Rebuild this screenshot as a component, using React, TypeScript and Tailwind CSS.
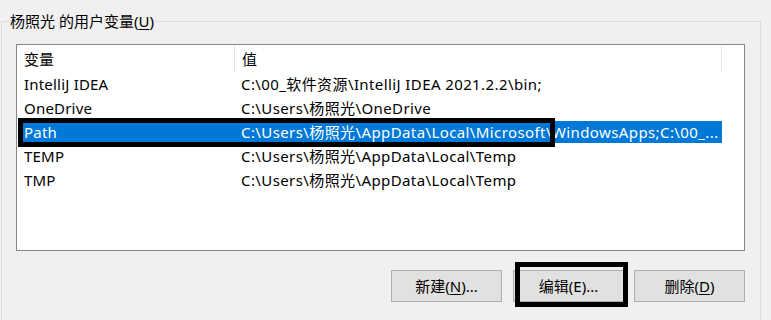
const font = "font-['Noto_Sans','Noto_Sans_CJK_SC',sans-serif]"

const rows = [
  { name: "IntelliJ IDEA", value: "C:\\00_软件资源\\IntelliJ IDEA 2021.2.2\\bin;" },
  { name: "OneDrive", value: "C:\\Users\\杨照光\\OneDrive" },
  { name: "Path", value: "C:\\Users\\杨照光\\AppData\\Local\\Microsoft\\WindowsApps;C:\\00_...", selected: true },
  { name: "TEMP", value: "C:\\Users\\杨照光\\AppData\\Local\\Temp" },
  { name: "TMP", value: "C:\\Users\\杨照光\\AppData\\Local\\Temp" },
]

function WinButton({ label, hotkey, suffix }: { label: string; hotkey: string; suffix: string }) {
  return (
    <button className="flex h-[32px] w-[111px] items-center justify-center border border-[#adadad] bg-[#e1e1e1] text-[15px] text-black">
      {label}(<span className="underline underline-offset-2">{hotkey}</span>){suffix}
    </button>
  )
}

export default function App() {
  return (
    <div className={`relative h-[320px] w-[771px] overflow-hidden bg-[#f0f0f0] pl-px pt-[11px] text-black ${font}`}>
      <fieldset className="w-[760px] border border-[#dcdcdc] pb-[40px]">
        <legend className="ml-[7px] h-[20px] px-px text-[15px] leading-[20px]">
          杨照光 的用户变量(<span className="underline underline-offset-2">U</span>)
        </legend>

        <div className="ml-[14px] mt-[13px] h-[207px] w-[729px] border border-[#828790] bg-white text-[15px] leading-[20px]">
          <div className="flex h-[27px] items-center">
            <div className="flex h-[26px] w-[217px] items-center self-end pl-[7px]">变量</div>
            <div className="h-[26px] w-px self-end bg-[#e5e5e5]" />
            <div className="flex h-[26px] w-[486px] items-center self-end pl-[7px]">值</div>
            <div className="h-[26px] w-px self-end bg-[#e5e5e5]" />
          </div>
          {rows.map((r) => (
            <div key={r.name} className="flex h-[24px] items-center pl-[5px]">
              <div
                className={`flex h-[22px] w-[700px] items-center ${
                  r.selected ? "bg-[#0078d7] text-white" : ""
                }`}
              >
                <div className="w-[212px] pl-[2px] tracking-[0.2px]">{r.name}</div>
                <div className="whitespace-nowrap pl-[7px] tracking-[0.4px]">{r.value}</div>
              </div>
            </div>
          ))}
        </div>

        <div className="ml-[14px] mt-[19px] flex w-[729px] justify-end">
          <WinButton label="新建" hotkey="N" suffix="..." />
          <div className="ml-[11px]">
            <button className="flex h-[32px] w-[111px] items-center justify-center border border-[#adadad] bg-[#e1e1e1] text-[15px] text-black">
              编辑(E)...
            </button>
          </div>
          <div className="ml-[10px]">
            <WinButton label="删除" hotkey="D" suffix="" />
          </div>
        </div>
      </fieldset>

      {/* annotation boxes drawn over the dialog */}
      <div className="pointer-events-none absolute left-[18px] top-[118px] h-[29px] w-[537px] border-[5px] border-black" />
      <div className="pointer-events-none absolute left-[515px] top-[262px] h-[45px] w-[113px] border-[5px] border-black" />
    </div>
  )
}
